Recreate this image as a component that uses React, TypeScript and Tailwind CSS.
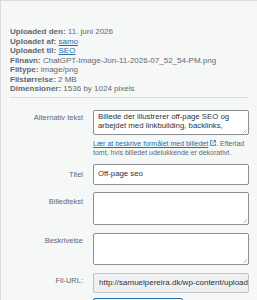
const meta = [
  { label: 'Uploaded den:', value: '11. juni 2026' },
  { label: 'Uploadet af:', value: 'samo', link: true },
  { label: 'Uploadet til:', value: 'SEO', link: true },
  { label: 'Filnavn:', value: 'ChatGPT-Image-Jun-11-2026-07_52_54-PM.png' },
  { label: 'Filtype:', value: 'image/png' },
  { label: 'Filstørrelse:', value: '2 MB' },
  { label: 'Dimensioner:', value: '1536 by 1024 pixels' },
]

const Label = ({ children, className = '' }: { children: React.ReactNode; className?: string }) => (
  <div className={`w-[82px] shrink-0 text-right text-[7.5px] leading-[9px] text-[#646970] ${className}`}>{children}</div>
)

const Grip = () => (
  <svg className="absolute right-[1px] bottom-[1px]" width="4" height="4" viewBox="0 0 4 4">
    <path d="M4 0L0 4M4 2L2 4" stroke="#a7aaad" strokeWidth="0.6" />
  </svg>
)

export default function App() {
  return (
    <div
      className="w-[257px] h-[300px] overflow-hidden bg-[#f6f7f7] border-t border-l border-[#dcdcde] flex flex-col"
      style={{ fontFamily: '"Liberation Sans", Arial, sans-serif' }}
    >
      {/* Details */}
      <div className="pl-[9px] pt-[26px] text-[8px] leading-[9.5px] text-[#646970]">
        {meta.map((m) => (
          <div key={m.label} className="whitespace-nowrap">
            <span className="font-bold">{m.label}</span>{' '}
            {m.link ? <span className="text-[#2271b1] underline">{m.value}</span> : m.value}
          </div>
        ))}
      </div>

      <div className="mx-[9px] mt-[3px] shrink-0 border-t border-[#dcdcde]" />

      {/* Fields */}
      <div className="flex flex-col pr-[8px] pt-[12px]">
        <div className="flex gap-[10px]">
          <Label className="pt-[3px]">Alternativ tekst</Label>
          <div className="flex-1 flex flex-col">
            <div className="relative h-[25px] bg-white border border-[#8c8f94] rounded-[2px] px-[4px] pt-[1.5px] text-[7.8px] leading-[9px] text-[#2c3338] overflow-hidden">
              Billede der illustrerer off-page SEO og arbejdet med linkbuilding, backlinks,
              <Grip />
            </div>
            <div className="mt-[4px] text-[7px] leading-[9.5px] text-[#646970]">
              <span className="text-[#2271b1] underline">Lær at beskrive formålet med billedet</span>
              <svg className="inline-block ml-[2px] mb-[1px]" width="6" height="6" viewBox="0 0 10 10">
                <path d="M4 1H1v8h8V6M6 1h3v3M9 1L4.5 5.5" stroke="#2271b1" strokeWidth="1.4" fill="none" />
              </svg>
              . Efterlad tomt, hvis billedet udelukkende er dekorativt.
            </div>
          </div>
        </div>

        <div className="flex gap-[10px] mt-[6px] items-center">
          <Label>Titel</Label>
          <div className="flex-1 h-[21px] bg-white border border-[#8c8f94] rounded-[2px] px-[4px] flex items-center text-[7.8px] text-[#2c3338]">
            Off-page seo
          </div>
        </div>

        <div className="flex gap-[10px] mt-[7px]">
          <Label className="pt-[5px]">Billedtekst</Label>
          <div className="relative flex-1 h-[33px] bg-white border border-[#8c8f94] rounded-[2px]">
            <Grip />
          </div>
        </div>

        <div className="flex gap-[10px] mt-[8px]">
          <Label className="pt-[3px]">Beskrivelse</Label>
          <div className="relative flex-1 h-[32px] bg-white border border-[#8c8f94] rounded-[2px]">
            <Grip />
          </div>
        </div>

        <div className="flex gap-[10px] mt-[8px]">
          <Label className="pt-[3px]">Fil-URL:</Label>
          <div className="flex-1 min-w-0 h-[20px] bg-[#f0f0f1] border border-[#c3c4c7] rounded-[2px] pl-[5px] flex items-center text-[8px] text-[#2c3338] overflow-hidden whitespace-nowrap">
            http://samuelpereira.dk/wp-content/uploads/2026/06/ChatGPT-Image.png
          </div>
        </div>

        <div className="flex gap-[10px] mt-[5px]">
          <div className="w-[82px] shrink-0" />
          <div className="w-[90px] h-[10px] border border-[#2271b1] rounded-[2px] bg-[#f6f7f7]" />
        </div>
      </div>
      <div className="mt-auto h-[1px] bg-[#3c434a] shrink-0" />
    </div>
  )
}
